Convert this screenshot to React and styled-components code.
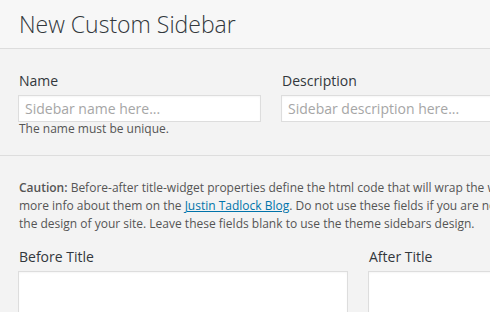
import React from "react";
import styled, { createGlobalStyle } from "styled-components";

const GlobalStyle = createGlobalStyle`
  html, body {
    margin: 0;
    padding: 0;
    overflow: hidden;
    background: #f3f3f3;
  }
  body {
    font-family: "Open Sans", "Liberation Sans", sans-serif;
    color: #444;
  }
`;

const Modal = styled.div`
  width: 716px;
  min-height: 312px;
  background: #f3f3f3;
`;

const Header = styled.div`
  height: 48px;
  display: flex;
  align-items: center;
  padding: 0 19px;
  background: #f7f7f7;
  border-bottom: 1px solid #dddddd;
  h1 {
    margin: 0;
    font-size: 23px;
    font-weight: 300;
    color: #32373c;
    padding-bottom: 1px;
  }
`;

const Section = styled.div`
  padding: ${(p) => p.$pad};
  border-bottom: ${(p) => (p.$divider ? "1px solid #dddddd" : "none")};
`;

const Row = styled.div`
  display: grid;
  grid-template-columns: ${(p) => p.$cols};
  column-gap: 20px;
`;

const Field = styled.div`
  display: flex;
  flex-direction: column;
`;

const Label = styled.label`
  font-size: 14px;
  line-height: 20px;
  color: #32373c;
  margin: 0 0 4px 1px;
`;

const Input = styled.input`
  box-sizing: border-box;
  height: 27px;
  width: 100%;
  margin: 0;
  padding: 0 6px;
  border: 1px solid #dddddd;
  background: #fff;
  box-shadow: inset 0 1px 2px rgba(0, 0, 0, 0.04);
  font-family: inherit;
  font-size: 14px;
  color: #32373c;
  outline: none;
  &::placeholder {
    color: #a6a6a6;
  }
`;

const Help = styled.p`
  margin: 0 0 0 1px;
  font-size: 12px;
  line-height: 14px;
  color: #555;
`;

const Note = styled.p`
  margin: 0 0 14px 1px;
  font-size: 12px;
  line-height: 18px;
  color: #555;
  white-space: nowrap;
  strong {
    font-weight: 600;
  }
  a {
    color: #0073aa;
    text-decoration: underline;
  }
`;

const TextArea = styled.textarea`
  box-sizing: border-box;
  width: 100%;
  height: 80px;
  margin: 0;
  border: 1px solid #dddddd;
  background: #fff;
  box-shadow: inset 0 1px 2px rgba(0, 0, 0, 0.04);
  resize: none;
  outline: none;
  font-family: inherit;
`;

export default function App() {
  return (
    <>
      <GlobalStyle />
      <Modal>
        <Header>
          <h1>New Custom Sidebar</h1>
        </Header>
        <Section $pad="22px 18px 19px" $divider>
          <Row $cols="243px 1fr">
            <Field>
              <Label>Name</Label>
              <Input placeholder="Sidebar name here..." />
              <Help>The name must be unique.</Help>
            </Field>
            <Field>
              <Label>Description</Label>
              <Input placeholder="Sidebar description here..." />
            </Field>
          </Row>
        </Section>
        <Section $pad="23px 18px 18px">
          <Note>
            <strong>Caution:</strong> Before-after title-widget properties define the html code that
            will wrap the widgets and their titles in the sidebars,
            <br />
            more info about them on the <a href="#">Justin Tadlock Blog</a>. Do not use these fields
            if you are not sure what you are doing, it can break
            <br />
            the design of your site. Leave these fields blank to use the theme sidebars design.
          </Note>
          <Row $cols="330px 330px">
            <Field>
              <Label>Before Title</Label>
              <TextArea />
            </Field>
            <Field>
              <Label>After Title</Label>
              <TextArea />
            </Field>
          </Row>
        </Section>
      </Modal>
    </>
  );
}
